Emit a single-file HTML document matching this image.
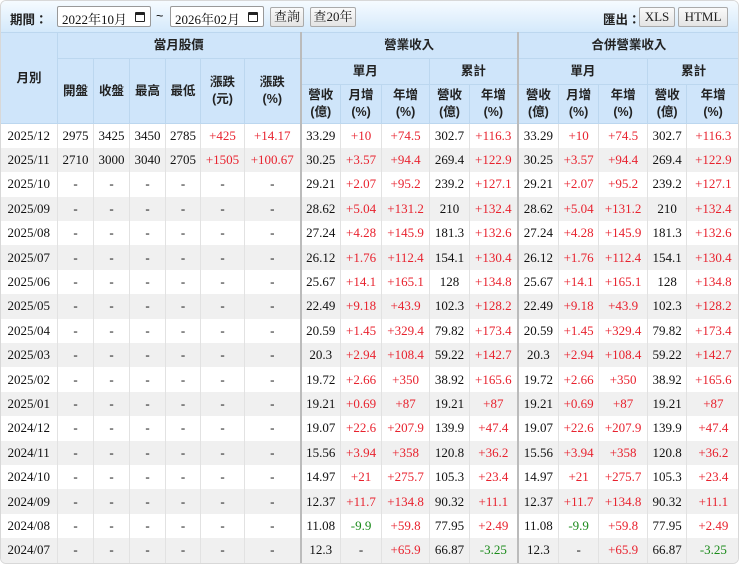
<!DOCTYPE html>
<html><head><meta charset="utf-8"><style>
*{margin:0;padding:0;box-sizing:border-box}
body{width:740px;height:566px;background:#fff;overflow:hidden;font-family:"Liberation Serif","Noto Serif CJK SC",serif;}
.wrap{position:absolute;left:0;top:0;width:739px;height:564px;border:1px solid #d8d8d8;border-radius:6px;overflow:hidden;background:#fff}
.bar{height:31px;background:linear-gradient(#f6fbff,#d4e9fb);position:relative;font-family:"Liberation Sans","Noto Sans CJK TC",sans-serif;font-size:12.5px}
.lab{position:absolute;top:8px;font-weight:bold;color:#222}
.inp{position:absolute;top:5px;height:21px;border:1px solid #999;border-radius:2px;background:#fff;font-family:"Liberation Serif","Noto Serif CJK TC",serif;font-size:13px;padding:2px 4px;color:#111}
.cal{position:absolute;right:5px;top:5px;width:10px;height:10px;border:1.5px solid #222;border-top-width:3px;border-radius:1px}
.btn{position:absolute;top:6px;height:20px;border:1px solid #aaa;border-radius:2px;background:linear-gradient(#fafafa,#e4e4e4);font-family:"Liberation Serif","Noto Serif CJK TC",serif;font-size:13px;text-align:center;line-height:18px;color:#222}
table{border-collapse:collapse;table-layout:fixed;width:739px;position:absolute;top:31px;left:-1px}
th{background:#cfe5fa;font-family:"Liberation Sans","Noto Sans CJK TC",sans-serif;font-weight:bold;font-size:12.5px;color:#222;border:1px solid #bcd7ef;line-height:17px;padding:0}
td{font-size:13px;text-align:center;height:24.4px;border-left:1px solid #e2e2e2;color:#111;white-space:nowrap;padding:0}
tr.g td{background:#f0f0f0}
.r{color:#e8222e}.gr{color:#1a8a1a}
.tk{border-left:2px solid #bbb !important}
</style></head><body><div class="wrap">
<div class="bar">
<span class="lab" style="left:9px">期間：</span>
<div class="inp" style="left:56px;width:94px">2022年10月<span class="cal"></span></div>
<span style="position:absolute;left:155px;top:8px">~</span>
<div class="inp" style="left:169px;width:94px">2026年02月<span class="cal"></span></div>
<div class="btn" style="left:269px;width:34px">查詢</div>
<div class="btn" style="left:309px;width:46px">查20年</div>
<span class="lab" style="left:602px">匯出：</span>
<div class="btn" style="left:638px;width:36px">XLS</div>
<div class="btn" style="left:677px;width:50px">HTML</div>
</div>
<table>
<colgroup><col style="width:57px"><col style="width:36px"><col style="width:36px"><col style="width:36px"><col style="width:35px"><col style="width:44px"><col style="width:56px"><col style="width:40px"><col style="width:41px"><col style="width:48px"><col style="width:40px"><col style="width:48px"><col style="width:41px"><col style="width:40px"><col style="width:49px"><col style="width:39px"><col style="width:53px"></colgroup>
<tr style="height:26px"><th rowspan="3">月別</th><th colspan="6">當月股價</th><th colspan="5" class="tk">營業收入</th><th colspan="5" class="tk">合併營業收入</th></tr>
<tr style="height:26px"><th rowspan="2">開盤</th><th rowspan="2">收盤</th><th rowspan="2">最高</th><th rowspan="2">最低</th><th rowspan="2">漲跌<br>(元)</th><th rowspan="2">漲跌<br>(%)</th><th colspan="3" class="tk">單月</th><th colspan="2">累計</th><th colspan="3" class="tk">單月</th><th colspan="2">累計</th></tr>
<tr style="height:39px"><th class="tk">營收<br>(億)</th><th>月增<br>(%)</th><th>年增<br>(%)</th><th>營收<br>(億)</th><th>年增<br>(%)</th><th class="tk">營收<br>(億)</th><th>月增<br>(%)</th><th>年增<br>(%)</th><th>營收<br>(億)</th><th>年增<br>(%)</th></tr>
<tr><td style="border-left:0">2025/12</td><td>2975</td><td>3425</td><td>3450</td><td>2785</td><td class="r">+425</td><td class="r">+14.17</td><td class="tk">33.29</td><td class="r">+10</td><td class="r">+74.5</td><td>302.7</td><td class="r">+116.3</td><td class="tk">33.29</td><td class="r">+10</td><td class="r">+74.5</td><td>302.7</td><td class="r">+116.3</td></tr>
<tr class="g"><td style="border-left:0">2025/11</td><td>2710</td><td>3000</td><td>3040</td><td>2705</td><td class="r">+1505</td><td class="r">+100.67</td><td class="tk">30.25</td><td class="r">+3.57</td><td class="r">+94.4</td><td>269.4</td><td class="r">+122.9</td><td class="tk">30.25</td><td class="r">+3.57</td><td class="r">+94.4</td><td>269.4</td><td class="r">+122.9</td></tr>
<tr><td style="border-left:0">2025/10</td><td>-</td><td>-</td><td>-</td><td>-</td><td>-</td><td>-</td><td class="tk">29.21</td><td class="r">+2.07</td><td class="r">+95.2</td><td>239.2</td><td class="r">+127.1</td><td class="tk">29.21</td><td class="r">+2.07</td><td class="r">+95.2</td><td>239.2</td><td class="r">+127.1</td></tr>
<tr class="g"><td style="border-left:0">2025/09</td><td>-</td><td>-</td><td>-</td><td>-</td><td>-</td><td>-</td><td class="tk">28.62</td><td class="r">+5.04</td><td class="r">+131.2</td><td>210</td><td class="r">+132.4</td><td class="tk">28.62</td><td class="r">+5.04</td><td class="r">+131.2</td><td>210</td><td class="r">+132.4</td></tr>
<tr><td style="border-left:0">2025/08</td><td>-</td><td>-</td><td>-</td><td>-</td><td>-</td><td>-</td><td class="tk">27.24</td><td class="r">+4.28</td><td class="r">+145.9</td><td>181.3</td><td class="r">+132.6</td><td class="tk">27.24</td><td class="r">+4.28</td><td class="r">+145.9</td><td>181.3</td><td class="r">+132.6</td></tr>
<tr class="g"><td style="border-left:0">2025/07</td><td>-</td><td>-</td><td>-</td><td>-</td><td>-</td><td>-</td><td class="tk">26.12</td><td class="r">+1.76</td><td class="r">+112.4</td><td>154.1</td><td class="r">+130.4</td><td class="tk">26.12</td><td class="r">+1.76</td><td class="r">+112.4</td><td>154.1</td><td class="r">+130.4</td></tr>
<tr><td style="border-left:0">2025/06</td><td>-</td><td>-</td><td>-</td><td>-</td><td>-</td><td>-</td><td class="tk">25.67</td><td class="r">+14.1</td><td class="r">+165.1</td><td>128</td><td class="r">+134.8</td><td class="tk">25.67</td><td class="r">+14.1</td><td class="r">+165.1</td><td>128</td><td class="r">+134.8</td></tr>
<tr class="g"><td style="border-left:0">2025/05</td><td>-</td><td>-</td><td>-</td><td>-</td><td>-</td><td>-</td><td class="tk">22.49</td><td class="r">+9.18</td><td class="r">+43.9</td><td>102.3</td><td class="r">+128.2</td><td class="tk">22.49</td><td class="r">+9.18</td><td class="r">+43.9</td><td>102.3</td><td class="r">+128.2</td></tr>
<tr><td style="border-left:0">2025/04</td><td>-</td><td>-</td><td>-</td><td>-</td><td>-</td><td>-</td><td class="tk">20.59</td><td class="r">+1.45</td><td class="r">+329.4</td><td>79.82</td><td class="r">+173.4</td><td class="tk">20.59</td><td class="r">+1.45</td><td class="r">+329.4</td><td>79.82</td><td class="r">+173.4</td></tr>
<tr class="g"><td style="border-left:0">2025/03</td><td>-</td><td>-</td><td>-</td><td>-</td><td>-</td><td>-</td><td class="tk">20.3</td><td class="r">+2.94</td><td class="r">+108.4</td><td>59.22</td><td class="r">+142.7</td><td class="tk">20.3</td><td class="r">+2.94</td><td class="r">+108.4</td><td>59.22</td><td class="r">+142.7</td></tr>
<tr><td style="border-left:0">2025/02</td><td>-</td><td>-</td><td>-</td><td>-</td><td>-</td><td>-</td><td class="tk">19.72</td><td class="r">+2.66</td><td class="r">+350</td><td>38.92</td><td class="r">+165.6</td><td class="tk">19.72</td><td class="r">+2.66</td><td class="r">+350</td><td>38.92</td><td class="r">+165.6</td></tr>
<tr class="g"><td style="border-left:0">2025/01</td><td>-</td><td>-</td><td>-</td><td>-</td><td>-</td><td>-</td><td class="tk">19.21</td><td class="r">+0.69</td><td class="r">+87</td><td>19.21</td><td class="r">+87</td><td class="tk">19.21</td><td class="r">+0.69</td><td class="r">+87</td><td>19.21</td><td class="r">+87</td></tr>
<tr><td style="border-left:0">2024/12</td><td>-</td><td>-</td><td>-</td><td>-</td><td>-</td><td>-</td><td class="tk">19.07</td><td class="r">+22.6</td><td class="r">+207.9</td><td>139.9</td><td class="r">+47.4</td><td class="tk">19.07</td><td class="r">+22.6</td><td class="r">+207.9</td><td>139.9</td><td class="r">+47.4</td></tr>
<tr class="g"><td style="border-left:0">2024/11</td><td>-</td><td>-</td><td>-</td><td>-</td><td>-</td><td>-</td><td class="tk">15.56</td><td class="r">+3.94</td><td class="r">+358</td><td>120.8</td><td class="r">+36.2</td><td class="tk">15.56</td><td class="r">+3.94</td><td class="r">+358</td><td>120.8</td><td class="r">+36.2</td></tr>
<tr><td style="border-left:0">2024/10</td><td>-</td><td>-</td><td>-</td><td>-</td><td>-</td><td>-</td><td class="tk">14.97</td><td class="r">+21</td><td class="r">+275.7</td><td>105.3</td><td class="r">+23.4</td><td class="tk">14.97</td><td class="r">+21</td><td class="r">+275.7</td><td>105.3</td><td class="r">+23.4</td></tr>
<tr class="g"><td style="border-left:0">2024/09</td><td>-</td><td>-</td><td>-</td><td>-</td><td>-</td><td>-</td><td class="tk">12.37</td><td class="r">+11.7</td><td class="r">+134.8</td><td>90.32</td><td class="r">+11.1</td><td class="tk">12.37</td><td class="r">+11.7</td><td class="r">+134.8</td><td>90.32</td><td class="r">+11.1</td></tr>
<tr><td style="border-left:0">2024/08</td><td>-</td><td>-</td><td>-</td><td>-</td><td>-</td><td>-</td><td class="tk">11.08</td><td class="gr">-9.9</td><td class="r">+59.8</td><td>77.95</td><td class="r">+2.49</td><td class="tk">11.08</td><td class="gr">-9.9</td><td class="r">+59.8</td><td>77.95</td><td class="r">+2.49</td></tr>
<tr class="g"><td style="border-left:0">2024/07</td><td>-</td><td>-</td><td>-</td><td>-</td><td>-</td><td>-</td><td class="tk">12.3</td><td>-</td><td class="r">+65.9</td><td>66.87</td><td class="gr">-3.25</td><td class="tk">12.3</td><td>-</td><td class="r">+65.9</td><td>66.87</td><td class="gr">-3.25</td></tr>
</table>
</div></body></html>
